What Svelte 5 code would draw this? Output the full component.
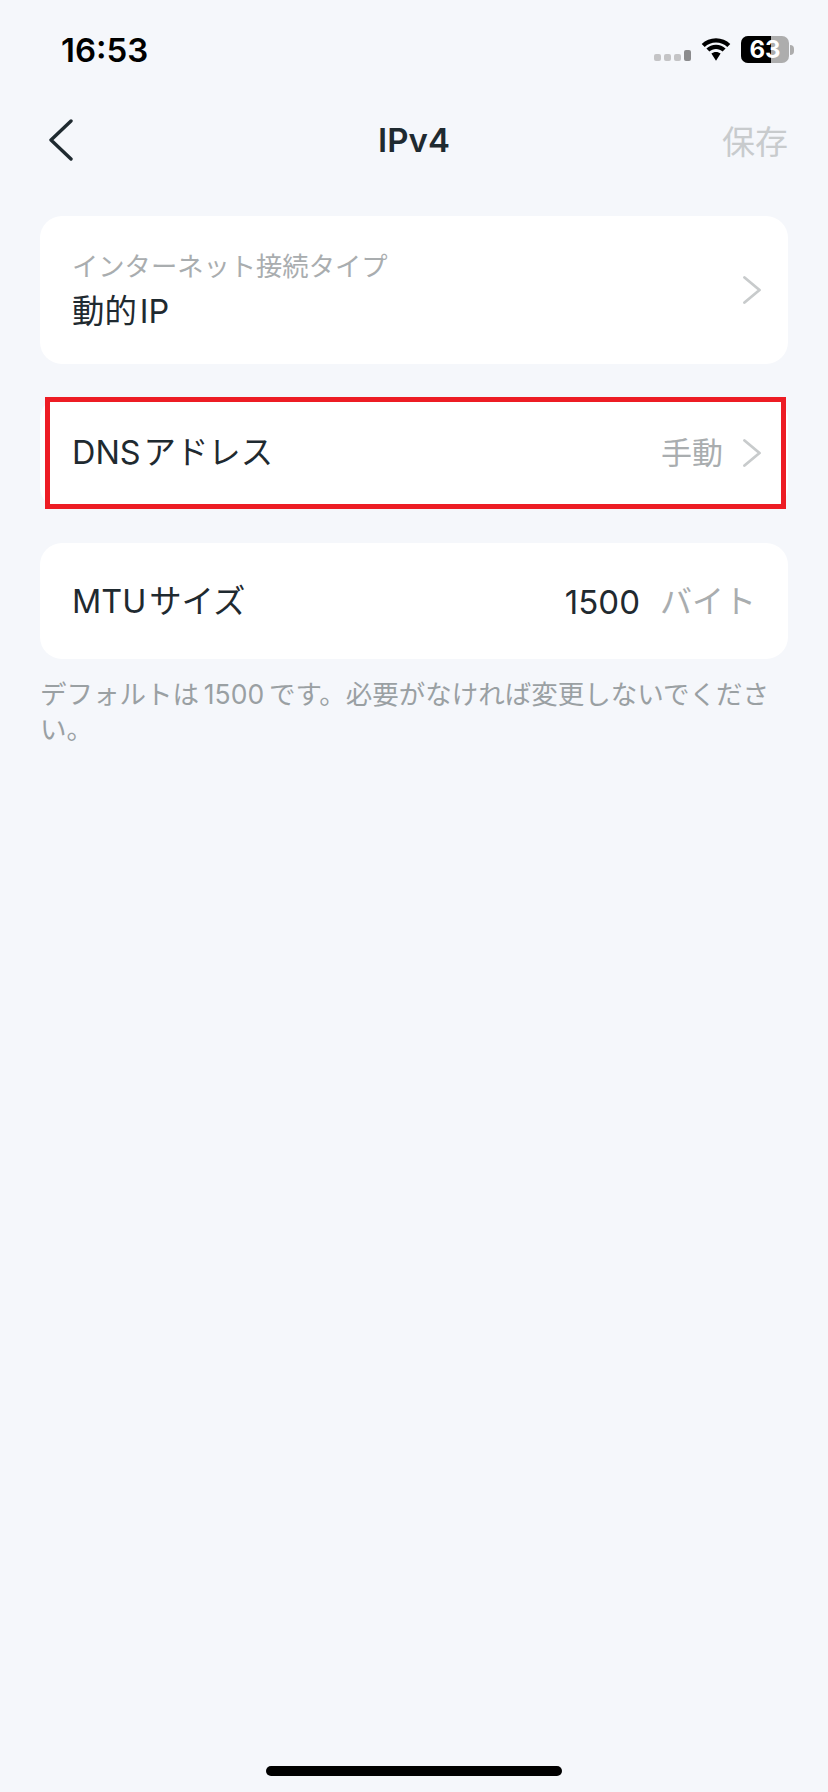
<script>
  const signalDots = [0, 1, 2];
</script>

<div class="screen">
  <div class="status">
    <span class="time">16:53</span>
    <div class="status-right">
      <div class="signal">
        {#each signalDots as d (d)}
          <i></i>
        {/each}
        <i class="on"></i>
      </div>
      <svg class="wifi" width="32" height="24" viewBox="0 0 34 25">
        <path d="M17 4.500c4.600 0 8.800 1.800 12 4.800l3.200-3.300C28.200 2.200 22.900 0 17 0S5.800 2.200 1.800 6L5 9.300c3.200-3 7.400-4.800 12-4.800z" fill="#000"/>
        <path d="M17 11.500c2.700 0 5.100 1 7 2.700l3.200-3.300C24.500 8.500 20.900 7 17 7s-7.500 1.500-10.200 3.900l3.200 3.300c1.900-1.700 4.300-2.700 7-2.700z" fill="#000"/>
        <path d="M17 14.500c-1.900 0-3.600.7-4.900 1.800L17 24l4.900-7.700c-1.300-1.100-3-1.800-4.900-1.800z" fill="#000"/>
      </svg>
      <div class="battery">
        <div class="batt-body">
          <div class="batt-fill"></div>
          <span>63</span>
        </div>
        <div class="batt-cap"></div>
      </div>
    </div>
  </div>

  <div class="nav">
    <svg class="back" width="24" height="42" viewBox="0 0 24 42">
      <path d="M22 2 2 21l20 19" fill="none" stroke="#1f2a30" stroke-width="3.400" stroke-linecap="round" stroke-linejoin="round"/>
    </svg>
    <span class="title">IPv4</span>
    <span class="save">保存</span>
  </div>

  <div class="content">
    <div class="card conn">
      <div class="conn-text">
        <span class="label">インターネット接続タイプ</span>
        <span class="main">動的&#8202;IP</span>
      </div>
      <svg class="chev" width="18" height="28" viewBox="0 0 18 28">
        <path d="M1.500 1.500 16.500 14 1.500 26.500" fill="none" stroke="#c8cbcc" stroke-width="2.800" stroke-linecap="round" stroke-linejoin="round"/>
      </svg>
    </div>

    <div class="card dns">
      <span class="main">DNS&#8202;アドレス</span>
      <div class="right">
        <span class="gray manual">手動</span>
        <svg class="chev" width="18" height="28" viewBox="0 0 18 28">
          <path d="M1.500 1.500 16.500 14 1.500 26.500" fill="none" stroke="#c8cbcc" stroke-width="2.800" stroke-linecap="round" stroke-linejoin="round"/>
        </svg>
      </div>
      <div class="highlight"></div>
    </div>

    <div class="card mtu">
      <span class="main">MTU&#8202;サイズ</span>
      <div class="right mtu-right">
        <span class="main number">1500</span>
        <span class="gray">バイト</span>
      </div>
    </div>

    <p class="hint">デフォルトは&#8201;1500&#8201;です。必要がなければ変更しないでください。</p>
  </div>

  <div class="home-bar"></div>
</div>

<style>
  :global(body) {
    margin: 0;
    background: #f5f7fb;
  }

  .screen {
    width: 828px;
    height: 1792px;
    display: flex;
    flex-direction: column;
    background: #f5f7fb;
    font-family: Inter, "Noto Sans CJK JP", sans-serif;
    color: #1f2a30;
    overflow: hidden;
  }

  .status {
    height: 99px;
    display: flex;
    justify-content: space-between;
    align-items: center;
    padding: 0 34px 0 61px;
    box-sizing: border-box;
  }

  .time {
    font-size: 33px;
    font-weight: 600;
    color: #000;
  }

  .status-right {
    display: flex;
    align-items: center;
    gap: 9px;
  }

  .signal {
    display: flex;
    align-items: flex-end;
    gap: 3px;
    margin-top: 12px;
  }

  .signal i {
    width: 7px;
    height: 7px;
    border-radius: 2px;
    background: #c4c4c6;
  }

  .signal i.on {
    height: 11px;
    background: #8b8b8d;
  }

  .battery {
    display: flex;
    align-items: center;
    gap: 1px;
  }

  .batt-body {
    position: relative;
    width: 48px;
    height: 27px;
    border-radius: 7px;
    background: #adadad;
    overflow: hidden;
    display: flex;
    justify-content: center;
    align-items: center;
  }

  .batt-fill {
    position: absolute;
    left: 0;
    top: 0;
    bottom: 0;
    width: 30px;
    background: #000;
  }

  .batt-body span {
    position: relative;
    color: #fff;
    font-size: 24px;
    font-weight: 700;
  }

  .batt-cap {
    width: 4px;
    height: 10px;
    border-radius: 0 4px 4px 0;
    background: #adadad;
  }

  .nav {
    height: 81px;
    display: flex;
    align-items: center;
    justify-content: space-between;
    padding: 0 40px 0 49px;
    position: relative;
  }

  .title {
    position: absolute;
    left: 0;
    right: 0;
    text-align: center;
    font-size: 33px;
    font-weight: 600;
    color: #1f2a30;
  }

  .save {
    font-size: 33px;
    color: #c8cbcd;
  }

  .content {
    padding: 36px 40px 0;
    display: flex;
    flex-direction: column;
  }

  .card {
    background: #fff;
    border-radius: 22px;
    display: flex;
    justify-content: space-between;
    align-items: center;
    padding: 0 27px 0 32px;
    position: relative;
  }

  .conn {
    height: 148px;
  }

  .conn-text {
    display: flex;
    flex-direction: column;
    gap: 3px;
  }

  .label {
    font-size: 26.300px;
    line-height: 40px;
    color: #a9adaf;
  }

  .main {
    font-size: 32.400px;
    line-height: 44px;
    color: #1f2a30;
  }

  .number {
    font-size: 33px;
  }

  .gray {
    font-size: 32px;
    line-height: 44px;
    color: #a9adaf;
  }

  .manual {
    font-size: 31px;
  }

  .dns {
    height: 112px;
    margin-top: 33px;
  }

  .right {
    display: flex;
    align-items: center;
    gap: 20px;
  }

  .highlight {
    position: absolute;
    left: 5px;
    top: 0;
    right: 2px;
    bottom: 0;
    border: 5px solid #ed1c24;
    pointer-events: none;
  }

  .mtu {
    height: 116px;
    margin-top: 34px;
    padding-right: 32px;
    padding-top: 2px;
    box-sizing: border-box;
  }

  .mtu-right {
    gap: 20px;
  }

  .hint {
    margin: 18px 0 0;
    font-size: 26.500px;
    line-height: 35px;
    color: #9aa0a3;
  }

  .home-bar {
    position: absolute;
    left: 266px;
    top: 1766px;
    width: 296px;
    height: 10px;
    border-radius: 5px;
    background: #000;
  }
</style>
